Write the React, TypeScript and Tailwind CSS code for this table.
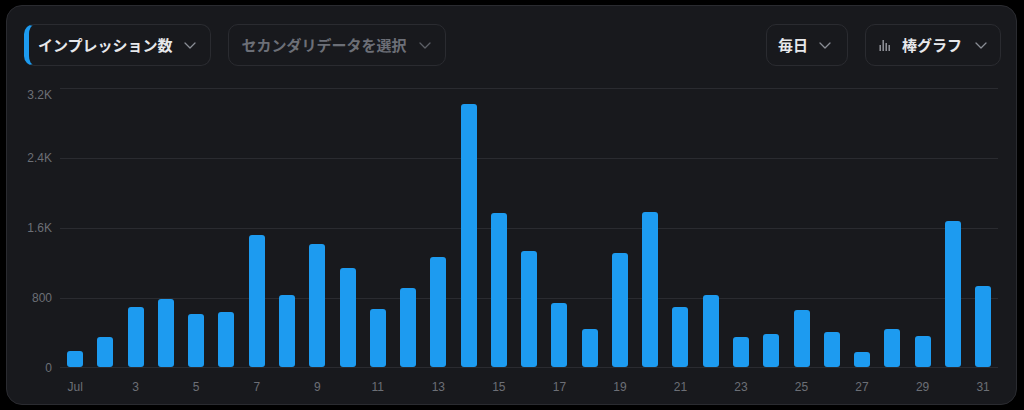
import React from "react";

const values = [
  198, 358, 700, 792, 617, 640, 1520, 838, 1417, 1146, 670, 914, 1269, 3017,
  1775, 1333, 743, 449, 1318, 1783, 693, 834, 358, 384, 666, 407, 186, 449,
  369, 1675, 941,
];

const MAX = 3200;
const PLOT_H = 280;

function Chevron({ color = "#8a8d95" }: { color?: string }) {
  return (
    <svg width="12" height="7" viewBox="0 0 12 7" fill="none">
      <path d="M1 1l5 5 5-5" stroke={color} strokeWidth="1.3" strokeLinecap="round" strokeLinejoin="round" />
    </svg>
  );
}

function BarIcon() {
  return (
    <svg width="12" height="12" viewBox="0 0 12 12" fill="#9a9ca3">
      <rect x="0.5" y="6" width="1.4" height="6" />
      <rect x="3.5" y="1" width="1.4" height="11" />
      <rect x="6.5" y="4" width="1.4" height="8" />
      <rect x="9.5" y="6" width="1.4" height="6" />
    </svg>
  );
}

const yTicks = [
  { label: "3.2K", top: 0 },
  { label: "2.4K", top: 70 - 7 },
  { label: "1.6K", top: 140 - 7 },
  { label: "800", top: 210 - 7 },
  { label: "0", top: 280 - 7 },
];

export default function App() {
  return (
    <div
      className="w-full h-[410px] bg-black pt-[5px] pl-[6px]"
      style={{ fontFamily: '"Liberation Sans", "Noto Sans CJK JP", sans-serif' }}
    >
      <div className="w-[1011px] h-[400px] rounded-[16px] border border-[#2a2b30] bg-[#18191d] pl-[17px] pr-[15px] pt-[18px]">
        {/* header */}
        <div className="flex items-center justify-between h-[42px]">
          <div className="flex items-center gap-[17px] h-full">
            <div className="flex items-center h-full rounded-[10px] border border-[#2a2b30] border-l-[5px] border-l-[#1d9bf0] pl-[9px] pr-[14px] gap-[11px]">
              <span className="text-[15px] font-bold text-[#e7e8eb] leading-none">インプレッション数</span>
              <Chevron />
            </div>
            <div className="flex items-center h-full rounded-[10px] border border-[#2a2b30] pl-[13px] pr-[14px] gap-[12px]">
              <span className="text-[15px] font-bold text-[#6c6f77] leading-none">セカンダリデータを選択</span>
              <Chevron color="#5c5f66" />
            </div>
          </div>
          <div className="flex items-center gap-[17px] h-full">
            <div className="flex items-center h-full rounded-[10px] border border-[#2a2b30] pl-[11px] pr-[16px] gap-[11px]">
              <span className="text-[15px] font-bold text-[#e7e8eb] leading-none">毎日</span>
              <Chevron />
            </div>
            <div className="flex items-center h-full rounded-[10px] border border-[#2a2b30] pl-[13px] pr-[13px]">
              <BarIcon />
              <span className="ml-[11px] text-[15px] font-bold text-[#e7e8eb] leading-none">棒グラフ</span>
              <span className="ml-[13px] flex"><Chevron /></span>
            </div>
          </div>
        </div>

        {/* chart */}
        <div className="mt-[22px] flex">
          <div className="relative w-[36px] h-[280px]">
            {yTicks.map((t) => (
              <div
                key={t.label}
                className="absolute right-[8px] text-[12px] leading-[14px] text-[#6c6f76]"
                style={{ top: t.top }}
              >
                {t.label}
              </div>
            ))}
          </div>
          <div className="w-[938px]">
            <div className="relative h-[280px]">
              {[0, 70, 140, 210, 279].map((y) => (
                <div key={y} className="absolute left-0 right-0 h-px bg-[#2a2b30]" style={{ top: y }} />
              ))}
              <div className="relative flex h-full items-end">
                {values.map((v, i) => (
                  <div key={i} className="flex flex-1 justify-center">
                    <div
                      className="w-[16px] rounded-[3px] bg-[#1d9bf0]"
                      style={{ height: Math.round((v / MAX) * PLOT_H) - 1, marginBottom: 1 }}
                    />
                  </div>
                ))}
              </div>
            </div>
            <div className="mt-[11px] flex">
              {values.map((_, i) => (
                <div key={i} className="flex-1 text-center text-[12px] leading-[16px] text-[#6c6f76]">
                  {i % 2 === 0 ? (i === 0 ? "Jul" : String(i + 1)) : ""}
                </div>
              ))}
            </div>
          </div>
        </div>
      </div>
    </div>
  );
}
